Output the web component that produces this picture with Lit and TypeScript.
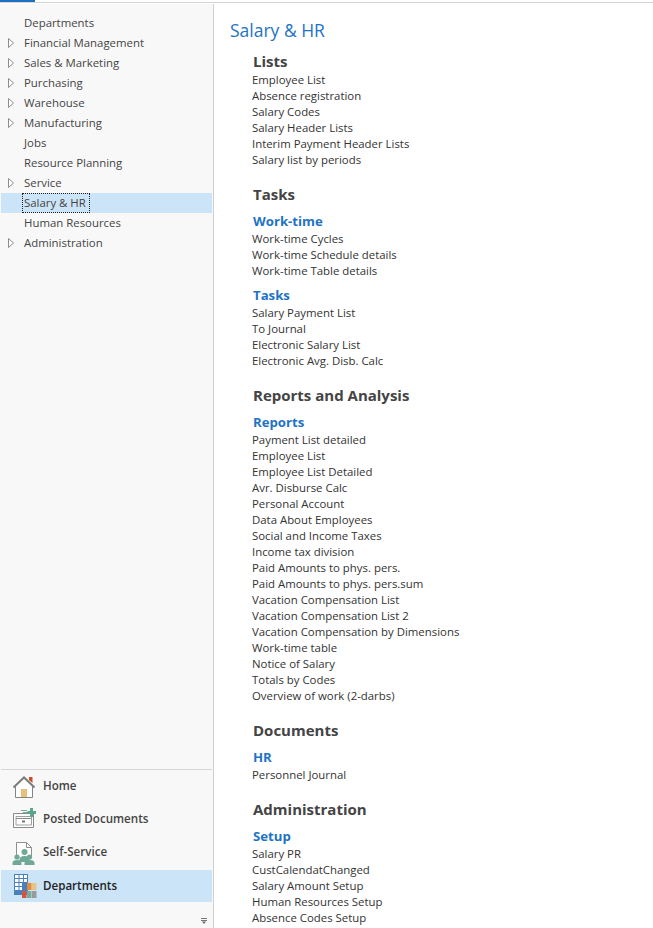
import { LitElement, html, css, svg } from "lit";
import { customElement } from "lit/decorators.js";

const tree: [string, boolean][] = [
  ["Departments", false], ["Financial Management", true], ["Sales & Marketing", true],
  ["Purchasing", true], ["Warehouse", true], ["Manufacturing", true], ["Jobs", false],
  ["Resource Planning", false], ["Service", true], ["Salary & HR", false],
  ["Human Resources", false], ["Administration", true],
];

type Group = { title?: string; items: string[] };
type Section = { title: string; groups: Group[] };
const sections: Section[] = [
  { title: "Lists", groups: [{ items: ["Employee List", "Absence registration", "Salary Codes", "Salary Header Lists", "Interim Payment Header Lists", "Salary list by periods"] }] },
  { title: "Tasks", groups: [
    { title: "Work-time", items: ["Work-time Cycles", "Work-time Schedule details", "Work-time Table details"] },
    { title: "Tasks", items: ["Salary Payment List", "To Journal", "Electronic Salary List", "Electronic Avg. Disb. Calc"] },
  ] },
  { title: "Reports and Analysis", groups: [{ title: "Reports", items: ["Payment List detailed", "Employee List", "Employee List Detailed", "Avr. Disburse Calc", "Personal Account", "Data About Employees", "Social and Income Taxes", "Income tax division", "Paid Amounts to phys. pers.", "Paid Amounts to phys. pers.sum", "Vacation Compensation List", "Vacation Compensation List 2", "Vacation Compensation by Dimensions", "Work-time table", "Notice of Salary", "Totals by Codes", "Overview of work (2-darbs)"] }] },
  { title: "Documents", groups: [{ title: "HR", items: ["Personnel Journal"] }] },
  { title: "Administration", groups: [{ title: "Setup", items: ["Salary PR", "CustCalendatChanged", "Salary Amount Setup", "Human Resources Setup", "Absence Codes Setup"] }] },
];

/* All icons use a 32x33 canvas whose origin is the row's top, at x = 8. */
const homeIcon = svg`<svg width="32" height="33" viewBox="0 0 32 33">
  <path d="M21 7h3.500v6L21 10z" fill="#d2492a"/>
  <path d="M7.500 16v11.500h17V16L16 8z" fill="#fff"/>
  <path d="M7.500 16.500v11h17v-11" fill="none" stroke="#848484"/>
  <path d="M5.500 17.500 16 7.500l10.500 10" fill="none" stroke="#7d7d7d" stroke-width="2"/>
  <rect x="13" y="19" width="6" height="8" fill="#e8c07d"/>
</svg>`;
const postedIcon = svg`<svg width="32" height="33" viewBox="0 0 32 33">
  <path d="M5.500 10.500h20v14h-20z" fill="#fff" stroke="#8a8a8a"/>
  <path d="M8 13.500h15.500v8.500H8z" fill="none" stroke="#a0a0a0"/>
  <path d="M8 15.500h15" stroke="#8a8a8a"/>
  <path d="M13 7.500h6M15 9.500h5" stroke="#77ac9a"/>
  <rect x="14" y="17.500" width="3" height="2" fill="#777"/>
  <path d="M23.500 5v9M19.500 9.500h8.500" stroke="#5ba58c" stroke-width="3"/>
</svg>`;
const selfIcon = svg`<svg width="32" height="33" viewBox="0 0 32 33">
  <path d="M8.500 20V6.500h10l5 5V22" fill="#fff" stroke="#8f8f8f"/>
  <path d="M18.500 6.500v5h5" fill="none" stroke="#8f8f8f"/>
  <circle cx="16.500" cy="16" r="3" fill="#6fa896"/>
  <circle cx="9" cy="21" r="2.600" fill="#6fa896"/>
  <circle cx="21.500" cy="21" r="2.600" fill="#6fa896"/>
  <path d="M4.500 29v-2q0-3 4.500-3t4.500 3v2zM11.500 24q0-4 5-4t5 4v2h-10zM16.500 29v-2q0-3 5-3t5 3v2z" fill="#6fa896"/>
</svg>`;
const deptIcon = svg`<svg width="32" height="33" viewBox="0 0 32 33">
  <rect x="6" y="4" width="14" height="21" fill="#4a81bd"/>
  <path d="M7 5h3.500v3H7zM11.500 5H15v3h-3.500zM16 5h3v3h-3zM7 9h3.500v3H7zM11.500 9H15v3h-3.500zM16 9h3v3h-3zM7 13h3.500v3H7zM11.500 13H14v3h-2.500zM7 17h3.500v3H7zM11.500 17H14v3h-2.500z" fill="#fff"/>
  <rect x="14" y="13" width="4.500" height="8" fill="#4a81bd"/>
  <rect x="19" y="13" width="4.500" height="7" fill="#e58a35"/>
  <rect x="24" y="13" width="4.500" height="7" fill="#e9c384"/>
  <rect x="14" y="21" width="4.500" height="7" fill="#d9533a"/>
  <rect x="19" y="21" width="4.500" height="7" fill="#77ac9a"/>
  <rect x="24" y="21" width="4.500" height="7" fill="#999"/>
</svg>`;

const nav = [
  { label: "Home", icon: homeIcon },
  { label: "Posted Documents", icon: postedIcon },
  { label: "Self-Service", icon: selfIcon },
  { label: "Departments", icon: deptIcon, active: true },
];

@customElement("app-root")
export class AppRoot extends LitElement {
  static styles = css`
    :host { display: block; width: 653px; height: 928px; overflow: hidden; background: #fff;
      font-family: "Open Sans", "Noto Sans", sans-serif; font-size: 11.4px; color: #333; }
    .topbar { height: 3px; box-sizing: border-box; border-bottom: 1px solid #d4d4d4; }
    .topbar div { width: 35px; height: 2px; background: #1f6fc0; }
    .main { display: flex; height: 924px; margin-top: 1px; }
    .side { box-sizing: border-box; background: #f8f8f8; border-right: 1px solid #d0d0d0;
      width: 214px; flex: none; display: flex; flex-direction: column; }
    .tree { flex: 1; padding: 9px 1px 0 1px; }
    .row { height: 20px; display: flex; align-items: center; color: #444; }
    .row.sel { background: #cce4f7; }
    .arrow { width: 23px; flex: none; display: flex; padding-left: 7px; box-sizing: border-box; }
    .row span { line-height: 17px; padding-bottom: 1px; }
    .row.sel span { outline: 1px dotted #222; padding: 0 3px 1px 1px; margin-left: -1px; }
    .nav { margin: 0 1px; border-top: 1px solid #d6d6d6; }
    .nitem { height: 33px; display: flex; align-items: center; font-weight: 600; font-size: 11.6px; color: #444; }
    .nitem span { padding-bottom: 2px; }
    .nitem.on { background: #cce4f7; color: #222; height: 32px; margin-top: 1px; }
    .nicon { width: 42px; flex: none; display: flex; padding-left: 7px; box-sizing: border-box; }
    .nitem.on .nicon { margin-top: 1px; }
    .foot { height: 26px; display: flex; justify-content: flex-end; align-items: flex-end; padding: 0 5px 4px 0; box-sizing: border-box; }
    .content { flex: 1; min-width: 0; padding-left: 16px; }
    h1 { margin: 0; font-weight: 400; font-size: 17.5px; line-height: 24px; color: #1e73c5; padding-top: 14px; }
    .sections { padding-left: 23px; padding-top: 10px; }
    .section { margin-bottom: 17px; }
    h2 { margin: 0; font-size: 15px; line-height: 19px; font-weight: 700; color: #444; height: 20px; }
    h3 { margin: 6px 0 0; font-size: 13.200px; line-height: 20px; font-weight: 700; color: #1e73c5; height: 20px; }
    .item { height: 16px; line-height: 16px; white-space: nowrap; color: #333; margin-left: -1px; }
  `;
  render() {
    return html`
      <div class="topbar"><div></div></div>
      <div class="main">
        <div class="side">
          <div class="tree">
            ${tree.map(([t, exp]) => html`<div class="row ${t === "Salary & HR" ? "sel" : ""}">
              <div class="arrow">${exp ? svg`<svg width="6" height="10" viewBox="0 0 6 10"><path d="M.5.5 5.500 5 .5 9.500z" fill="#fff" stroke="#8c8c8c"/></svg>` : ""}</div>
              <span>${t}</span></div>`)}
          </div>
          <div class="nav">
            ${nav.map((n) => html`<div class="nitem ${n.active ? "on" : ""}"><div class="nicon">${n.icon}</div><span>${n.label}</span></div>`)}
            <div class="foot"><svg width="6" height="6" viewBox="0 0 6 6"><path d="M0 .5h6M0 2.500h6" stroke="#777"/><path d="M1 3.500h4L3 6z" fill="#666"/></svg></div>
          </div>
        </div>
        <div class="content">
          <h1>Salary &amp; HR</h1>
          <div class="sections">
            ${sections.map((s) => html`<div class="section"><h2>${s.title}</h2>
              ${s.groups.map((g) => html`${g.title ? html`<h3>${g.title}</h3>` : ""}${g.items.map((i) => html`<div class="item">${i}</div>`)}`)}
            </div>`)}
          </div>
        </div>
      </div>`;
  }
}
